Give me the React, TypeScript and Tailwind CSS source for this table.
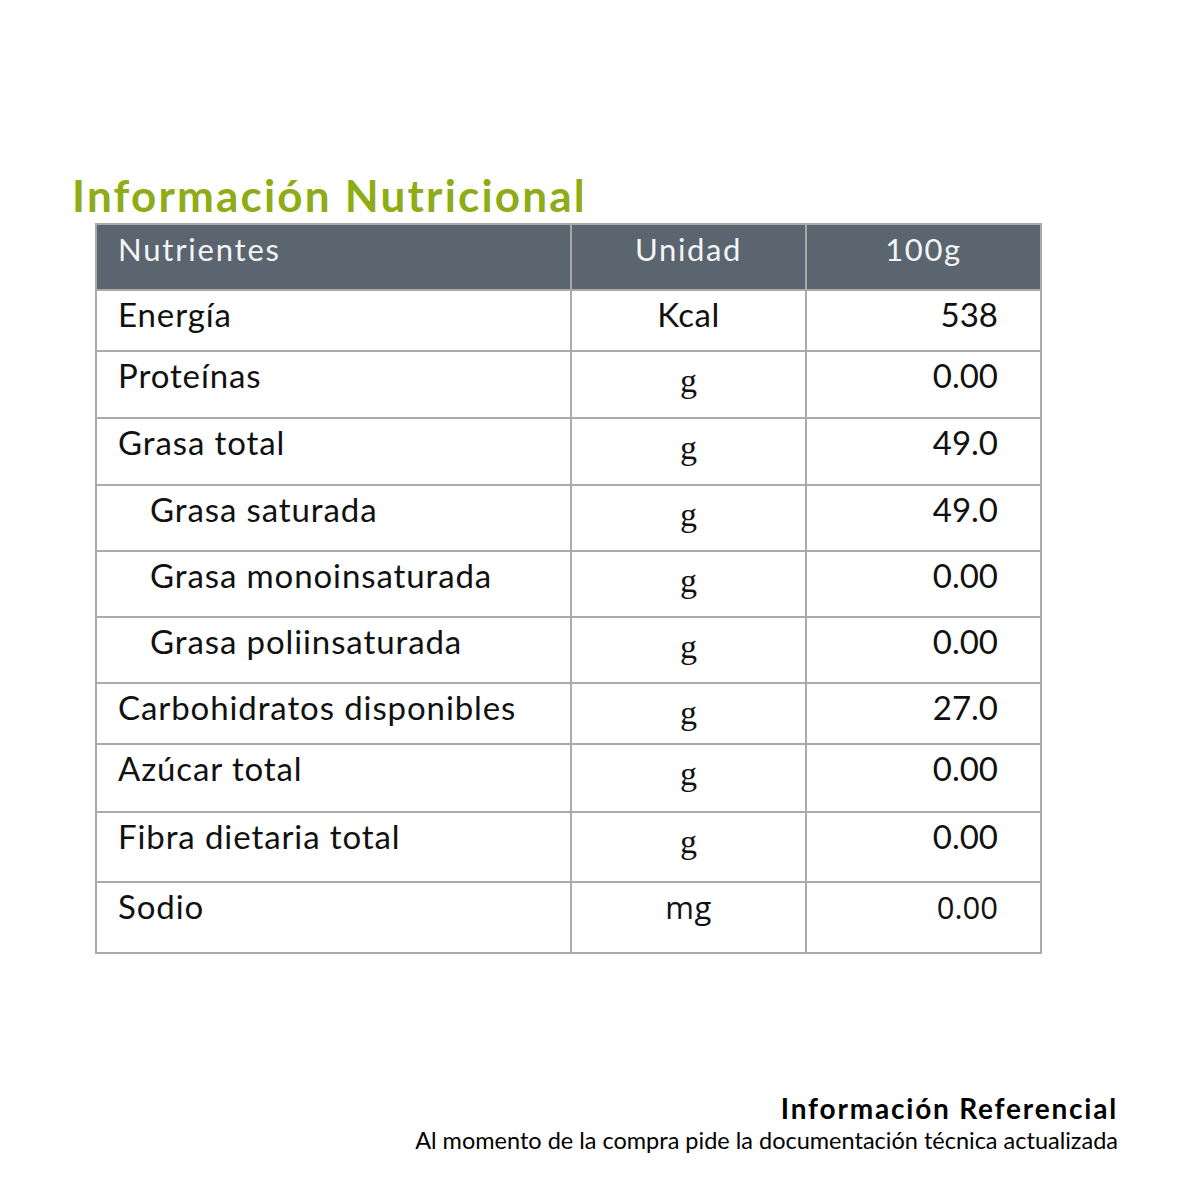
import React from "react";

type Row = { name: string; unit: string; value: string; indent?: boolean; h: number; unitSerif?: boolean; alt?: boolean };

const rows: Row[] = [
  { name: "Energía", unit: "Kcal", value: "538", h: 61 },
  { name: "Proteínas", unit: "g", value: "0.00", h: 67, unitSerif: true },
  { name: "Grasa total", unit: "g", value: "49.0", h: 67, unitSerif: true },
  { name: "Grasa saturada", unit: "g", value: "49.0", indent: true, h: 66, unitSerif: true },
  { name: "Grasa monoinsaturada", unit: "g", value: "0.00", indent: true, h: 66, unitSerif: true },
  { name: "Grasa poliinsaturada", unit: "g", value: "0.00", indent: true, h: 66, unitSerif: true },
  { name: "Carbohidratos disponibles", unit: "g", value: "27.0", h: 61, unitSerif: true },
  { name: "Azúcar total", unit: "g", value: "0.00", h: 68, unitSerif: true },
  { name: "Fibra dietaria total", unit: "g", value: "0.00", h: 70, unitSerif: true },
  { name: "Sodio", unit: "mg", value: "0.00", h: 71, alt: true },
];

export default function App() {
  return (
    <div className="w-[1195px] h-[1195px] bg-white relative overflow-hidden" style={{ fontFamily: "Lato, 'Open Sans', sans-serif" }}>
      <div className="pt-[168px] pl-[72px]">
        <h1 className="text-[44px] font-bold leading-[54px] text-[#8dac16] tracking-[2.2px]">Información Nutricional</h1>
      </div>
      <div className="ml-[95px] mt-[1px]">
        <table className="border-collapse w-[947px] table-fixed">
          <colgroup>
            <col className="w-[475px]" />
            <col className="w-[235px]" />
            <col className="w-[235px]" />
          </colgroup>
          <thead>
            <tr className="h-[66px] bg-[#5a6570] text-[#f4f5f6]">
              <th className="border-2 border-[#a8aaac] text-left font-normal align-top pl-[21px] pt-[4px] text-[31px] leading-[40px] tracking-[1.8px]">Nutrientes</th>
              <th className="border-2 border-[#a8aaac] text-center font-normal align-top pt-[4px] text-[31px] leading-[40px] tracking-[1.6px]">Unidad</th>
              <th className="border-2 border-[#a8aaac] text-center font-normal align-top pt-[4px] text-[31px] leading-[40px] tracking-[1.6px]">100g</th>
            </tr>
          </thead>
          <tbody>
            {rows.map((r) => (
              <tr key={r.name} style={{ height: r.h }} className="text-[#111111]">
                <td className={`border-2 border-[#a8aaac] align-top pt-[3px] text-[33px] leading-[40px] tracking-[0.9px] ${r.indent ? "pl-[53px]" : "pl-[21px]"}`}>
                  {r.name}
                </td>
                <td className="border-2 border-[#a8aaac] align-top text-center text-[33px] leading-[40px] pt-[3px]">
                  {r.unitSerif ? (
                    <span className="inline-block pt-[6px]" style={{ fontFamily: "'Liberation Serif', serif", fontSize: 34 }}>{r.unit}</span>
                  ) : (
                    <span className="tracking-[0.5px]" style={r.alt ? { fontFamily: "'Open Sans', sans-serif", fontSize: 31 } : undefined}>{r.unit}</span>
                  )}
                </td>
                <td className="border-2 border-[#a8aaac] align-top text-right pr-[42px] pt-[3px] text-[33px] leading-[40px]">
                  <span style={r.alt ? { fontFamily: "'Open Sans', sans-serif", fontSize: 31 } : undefined}>{r.value}</span>
                </td>
              </tr>
            ))}
          </tbody>
        </table>
      </div>
      <div className="absolute right-[77px] top-[1090px] text-right text-black">
        <div className="text-[28px] font-bold leading-[36px] tracking-[1.8px]">Información Referencial</div>
        <div className="text-[23.5px] leading-[28px]">Al momento de la compra pide la documentación técnica actualizada</div>
      </div>
    </div>
  );
}
